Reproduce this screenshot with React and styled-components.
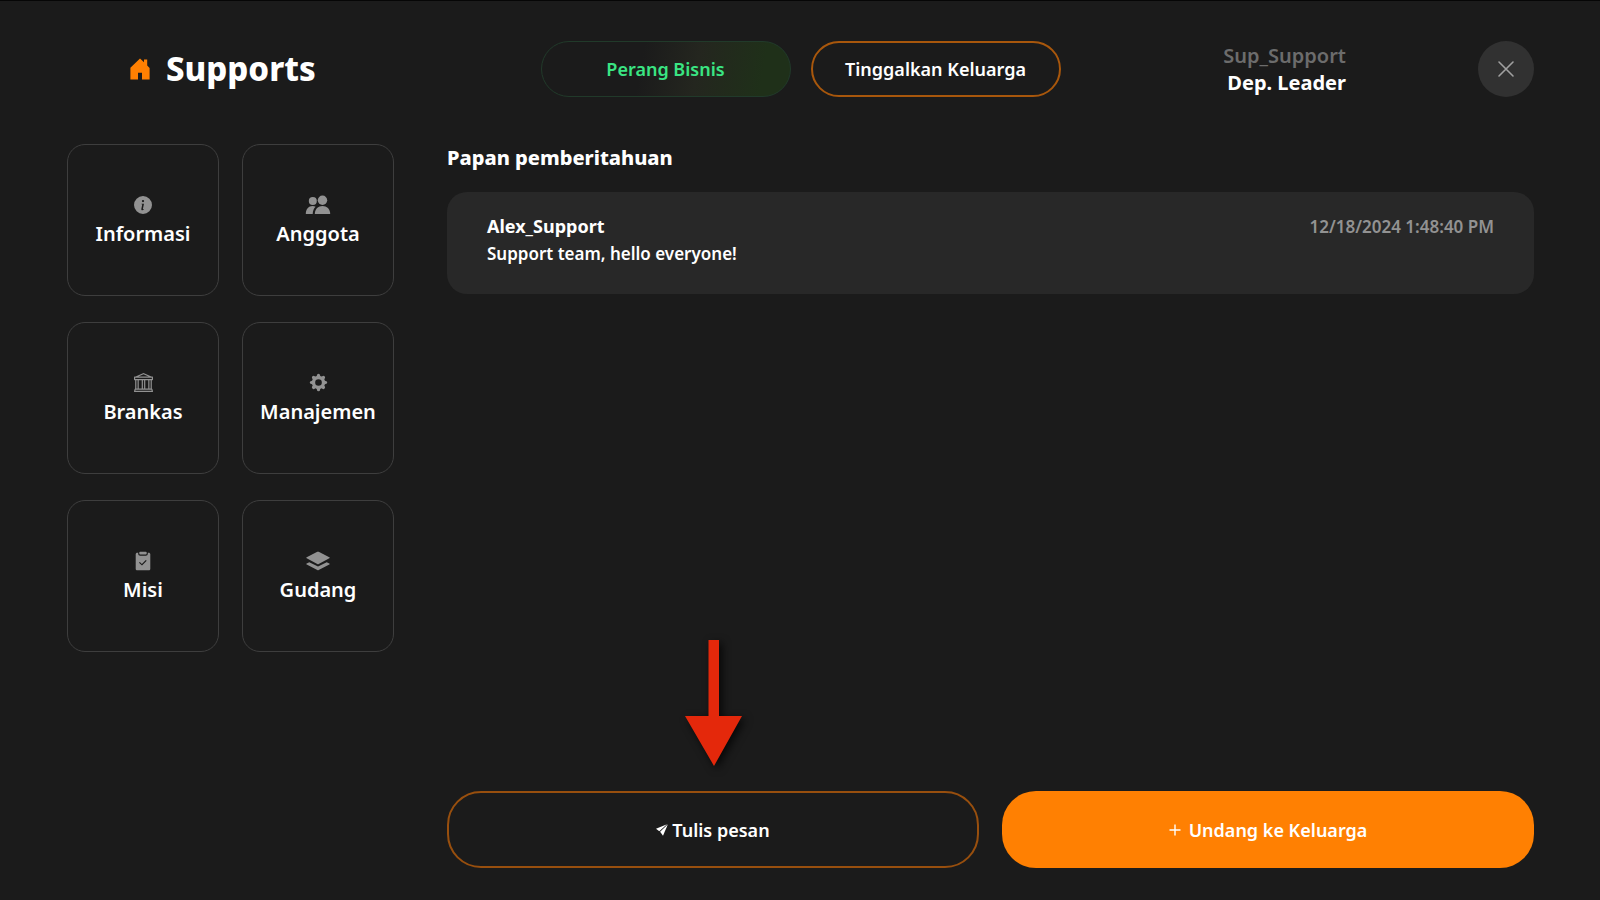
import React from "react";
import styled, { createGlobalStyle, css } from "styled-components";
import { BsBank, BsInfoCircleFill } from "react-icons/bs";

const GlobalStyle = createGlobalStyle`
  *, *::before, *::after { box-sizing: border-box; }
  body {
    margin: 0;
    background: #1b1b1b;
    color: #fff;
    font-family: "Noto Sans", "Open Sans", sans-serif;
  }
  button { font-family: inherit; cursor: pointer; }
  h1, h2, h3, p { margin: 0; }
`;

const Page = styled.div`
  min-height: 100vh;
  display: flex;
  flex-direction: column;
  gap: 47px;
  padding: 40px 66px 32px 67px;
  border-top: 1px solid #060606;
`;

const Header = styled.header`
  display: grid;
  grid-template-columns: 1fr auto 1fr;
  align-items: center;
`;

const Brand = styled.div`
  display: flex;
  align-items: center;
  gap: 16px;
  padding-left: 63px;
`;

const BrandName = styled.h1`
  font-size: 33px;
  line-height: 40px;
  font-weight: 800;
`;

const HeaderActions = styled.div`
  display: flex;
  gap: 20px;
`;

const PillButton = styled.button`
  width: 250px;
  height: 56px;
  border-radius: 28px;
  font-size: 18px;
  line-height: 24px;
  font-weight: 600;
  ${({ $tone }) =>
    $tone === "war"
      ? css`
          color: #3ae583;
          border: 1px solid #213a2a;
          background: linear-gradient(100deg, #1b1b1b 40%, #24261f 62%, #1f3019 88%);
        `
      : css`
          color: #fff;
          border: 2px solid #a8570c;
          background: transparent;
        `}
`;

const Account = styled.div`
  display: flex;
  align-items: center;
  justify-content: flex-end;
  gap: 132px;
`;

const AccountText = styled.div`
  text-align: right;
  font-size: 20px;
  line-height: 27px;
`;

const AccountName = styled.p`
  color: #6c6c6c;
  font-weight: 600;
`;

const AccountRank = styled.p`
  font-weight: 700;
`;

const CloseButton = styled.button`
  display: grid;
  place-items: center;
  width: 56px;
  height: 56px;
  padding: 0;
  border: 0;
  border-radius: 50%;
  background: #313131;
  color: #a0a0a0;
`;

const Body = styled.div`
  flex: 1;
  display: flex;
  gap: 53px;
`;

const Menu = styled.nav`
  display: grid;
  grid-template-columns: repeat(2, 152px);
  grid-auto-rows: 152px;
  gap: 26px 23px;
  align-content: start;
`;

const Tile = styled.button`
  display: flex;
  flex-direction: column;
  align-items: center;
  justify-content: center;
  gap: 5px;
  padding: 2px 0 0;
  border: 1px solid #3e3e3e;
  border-radius: 18px;
  background: transparent;
  color: #fff;
  font-size: 20px;
  line-height: 28px;
  font-weight: 600;
`;

const TileIcon = styled.span`
  display: grid;
  place-items: center;
  height: 20px;
  color: #929292;
`;

const Board = styled.main`
  flex: 1;
  display: flex;
  flex-direction: column;
`;

const BoardTitle = styled.h2`
  margin-bottom: 21px;
  font-size: 20px;
  line-height: 27px;
  font-weight: 800;
`;

const Message = styled.article`
  display: flex;
  justify-content: space-between;
  min-height: 102px;
  padding: 21px 40px;
  border-radius: 20px;
  background: #282828;
  font-size: 17px;
  line-height: 27px;
`;

const Author = styled.h3`
  font-size: 18px;
  font-weight: 700;
`;

const MessageText = styled.p`
  font-weight: 600;
`;

const SentAt = styled.time`
  color: #929292;
  font-weight: 600;
`;

const Footer = styled.footer`
  display: flex;
  gap: 23px;
  margin-top: auto;
`;

const FooterCell = styled.div`
  position: relative;
  flex: 1;
  display: flex;
`;

const WideButton = styled.button`
  flex: 1;
  display: flex;
  align-items: center;
  justify-content: center;
  gap: ${({ $filled }) => ($filled ? "8px" : "4px")};
  height: 77px;
  border: ${({ $filled }) => ($filled ? "0" : "2px solid #984f0e")};
  border-radius: 34px;
  background: ${({ $filled }) => ($filled ? "#ff8002" : "transparent")};
  color: #fff;
  font-size: 18px;
  line-height: 24px;
  font-weight: 600;
`;

const Pointer = styled.svg`
  position: absolute;
  left: 50%;
  bottom: calc(100% + 14px);
  transform: translateX(-50%);
  filter: drop-shadow(3px 3px 4px rgba(0, 0, 0, 0.75));
  pointer-events: none;
`;

const HouseIcon = () => (
  <svg width="20" height="22" viewBox="0 0 20 22" fill="#ff8002" aria-hidden="true">
    <path d="M10 .5 14 4.300V1.500h3.200v6L19.600 10v11.500h-7.600v-6.800H8v6.800H.4V9.800Z" />
  </svg>
);

const PeopleIcon = () => (
  <svg width="26" height="20" viewBox="0 0 26 20" fill="currentColor" aria-hidden="true">
    <circle cx="7.800" cy="6" r="4" />
    <circle cx="17.500" cy="5.200" r="4.700" />
    <path d="M.8 19c0-5 2.800-8 6.700-8 1.200 0 2.200.2 3.100.7-1.700 1.500-2.800 3.900-2.900 7.300Z" />
    <path d="M9.800 19c0-5.200 3.400-8.100 7.700-8.100S25.200 13.800 25.200 19Z" />
  </svg>
);

const GearIcon = () => (
  <svg width="19" height="19" viewBox="0 0 20 20" fill="currentColor" aria-hidden="true">
    <path
      fillRule="evenodd"
      d="M8.300 2.400Q8.500.8 10 .8t1.700 1.600l.1.700 1.600.7.600-.5q1.300-.9 2.400.2t.2 2.400l-.5.600.7 1.700.7.100q1.700.2 1.700 1.700t-1.700 1.700l-.7.100-.7 1.600.5.600q.9 1.300-.2 2.400t-2.400.2l-.6-.5-1.600.7-.1.700Q11.500 19.200 10 19.200t-1.700-1.700l-.1-.7-1.600-.7-.6.5q-1.300.9-2.400-.2t-.2-2.400l.5-.6-.7-1.600-.7-.1Q.8 11.500.8 10t1.700-1.700l.7-.1.700-1.700-.5-.6q-.9-1.300.2-2.400t2.400-.2l.6.500 1.600-.7ZM10 6.500a3.500 3.500 0 1 0 0 7 3.500 3.500 0 0 0 0-7Z"
    />
  </svg>
);

const ClipboardIcon = () => (
  <svg width="16" height="20" viewBox="0 0 16 20" fill="currentColor" aria-hidden="true">
    <path d="M5.200.7h5.600c.6 0 .9.400.9.900v.9c0 .6-.4.900-.9.900H5.200c-.6 0-.9-.4-.9-.9v-.9c0-.5.3-.9.900-.9Z" />
    <path
      fillRule="evenodd"
      d="M2.300 1.700h.9v1.100c0 1.200.8 2 2 2h5.600c1.200 0 2-.8 2-2V1.700h.9c.9 0 1.600.7 1.600 1.600v14.400c0 .9-.7 1.600-1.600 1.600H2.300c-.9 0-1.600-.7-1.600-1.600V3.300c0-.9.7-1.600 1.600-1.600Zm2.500 9.300-.8.800 3 2.700 4.700-4.700-.9-.8-3.900 3.900Z"
    />
  </svg>
);

const LayersIcon = () => (
  <svg width="24" height="20" viewBox="0 0 24 20" fill="currentColor" aria-hidden="true">
    <path d="M11.300.8q.7-.3 1.400 0l10.600 5.400q.9.500 0 1.100l-10.600 5.700q-.7.400-1.400 0L.7 7.300q-.9-.6 0-1.100Z" />
    <path d="M3.300 11.200 12 15.600l8.700-4.400 2.600 1.300q.9.500 0 1.100l-10.600 5.400q-.7.400-1.400 0L.7 13.600q-.9-.6 0-1.100Z" />
  </svg>
);

const PlaneIcon = () => (
  <svg width="12" height="12" viewBox="0 0 12 12" fill="currentColor" aria-hidden="true">
    <path d="M0 4.800 11 .2 3.300 7.200Z" />
    <path d="M11.900.2 7 11.800 4.100 7.700Z" />
  </svg>
);

const PlusIcon = () => (
  <svg width="12" height="12" viewBox="0 0 12 12" stroke="currentColor" strokeWidth="1.400" aria-hidden="true">
    <path d="M6 .5v11M.5 6h11" />
  </svg>
);

const CrossIcon = () => (
  <svg width="18" height="18" viewBox="0 0 18 18" stroke="currentColor" strokeWidth="1.600" strokeLinecap="round" aria-hidden="true">
    <path d="m2 2 14 14M16 2 2 16" />
  </svg>
);

const menu = [
  { label: "Informasi", icon: <BsInfoCircleFill size={18} /> },
  { label: "Anggota", icon: <PeopleIcon /> },
  { label: "Brankas", icon: <BsBank size={19} /> },
  { label: "Manajemen", icon: <GearIcon /> },
  { label: "Misi", icon: <ClipboardIcon /> },
  { label: "Gudang", icon: <LayersIcon /> },
];

export default function App() {
  return (
    <>
      <GlobalStyle />
      <Page>
        <Header>
          <Brand>
            <HouseIcon />
            <BrandName>Supports</BrandName>
          </Brand>
          <HeaderActions>
            <PillButton type="button" $tone="war">Perang Bisnis</PillButton>
            <PillButton type="button">Tinggalkan Keluarga</PillButton>
          </HeaderActions>
          <Account>
            <AccountText>
              <AccountName>Sup_Support</AccountName>
              <AccountRank>Dep. Leader</AccountRank>
            </AccountText>
            <CloseButton type="button" aria-label="Tutup">
              <CrossIcon />
            </CloseButton>
          </Account>
        </Header>
        <Body>
          <Menu>
            {menu.map(({ label, icon }) => (
              <Tile key={label} type="button">
                <TileIcon>{icon}</TileIcon>
                {label}
              </Tile>
            ))}
          </Menu>
          <Board>
            <BoardTitle>Papan pemberitahuan</BoardTitle>
            <Message>
              <div>
                <Author>Alex_Support</Author>
                <MessageText>Support team, hello everyone!</MessageText>
              </div>
              <SentAt>12/18/2024 1:48:40 PM</SentAt>
            </Message>
            <Footer>
              <FooterCell>
                <Pointer width="60" height="138" viewBox="0 0 60 138" fill="#e4280b" aria-hidden="true">
                  <path d="M25.500 1h10.500v76h23L31 127 2 77h23.500Z" />
                </Pointer>
                <WideButton type="button">
                  <PlaneIcon />
                  Tulis pesan
                </WideButton>
              </FooterCell>
              <FooterCell>
                <WideButton type="button" $filled>
                  <PlusIcon />
                  Undang ke Keluarga
                </WideButton>
              </FooterCell>
            </Footer>
          </Board>
        </Body>
      </Page>
    </>
  );
}
